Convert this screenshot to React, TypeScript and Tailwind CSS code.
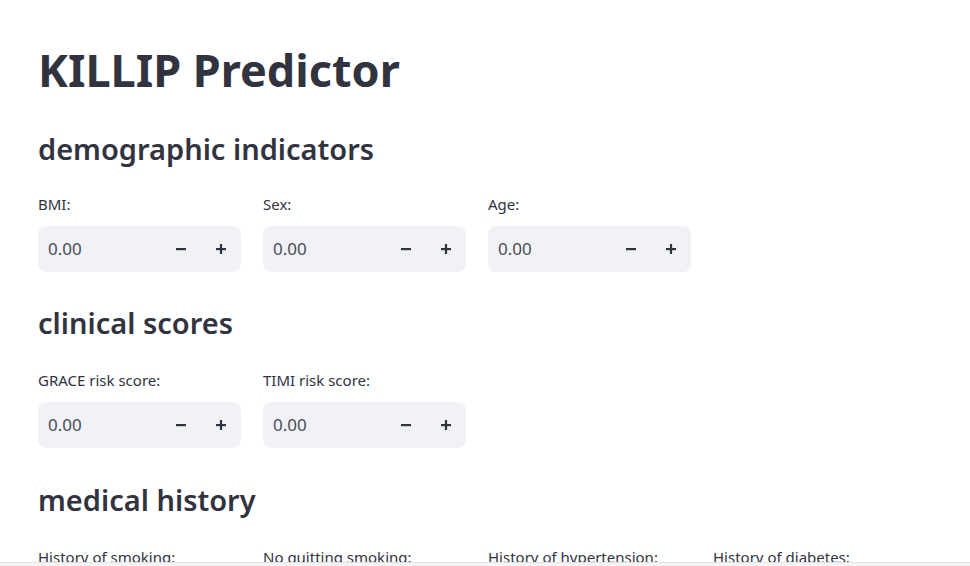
import React from 'react';

const font = { fontFamily: '"Noto Sans", Lato, sans-serif' };

const NumberInput = ({ label }: { label: string }) => (
    <div className="w-[203px] flex flex-col">
        <label className="text-[15px] leading-[20px] text-[#31333f] h-[20px] mb-[12px] whitespace-nowrap">
            {label}
        </label>
        <div className="h-[46px] rounded-lg bg-[#f0f2f6] flex flex-row items-center">
            <span className="flex-1 pl-[10px] text-[17px] text-[#4a4c57]">0.00</span>
            <button className="w-[40px] h-full flex items-center justify-center text-[#31333f]">
                <svg width="12" height="12" viewBox="0 0 12 12">
                    <rect x="1" y="5" width="10" height="2.2" fill="currentColor" />
                </svg>
            </button>
            <button className="w-[40px] h-full flex items-center justify-center text-[#31333f]">
                <svg width="12" height="12" viewBox="0 0 12 12">
                    <rect x="1" y="5" width="10" height="2.2" fill="currentColor" />
                    <rect x="4.9" y="1" width="2.2" height="10" fill="currentColor" />
                </svg>
            </button>
        </div>
    </div>
);

const Subheader = ({ children }: { children: React.ReactNode }) => (
    <h3 className="text-[29px] font-semibold leading-[40px] text-[#31333f]">
        {children}
    </h3>
);

export default function App() {
    return (
        <div className="w-[970px] h-[566px] bg-white flex flex-col overflow-hidden" style={font}>
            <div className="flex-1 overflow-hidden px-[38px]">
                <h1 className="mt-[41px] text-[45px] font-bold leading-[57px] text-[#31333f]">
                    KILLIP Predictor
                </h1>
                <div className="mt-[31px]">
                    <Subheader>demographic indicators</Subheader>
                </div>
                <div className="mt-[25px] flex flex-row gap-[22px]">
                    <NumberInput label="BMI:" />
                    <NumberInput label="Sex:" />
                    <NumberInput label="Age:" />
                </div>
                <div className="mt-[31px]">
                    <Subheader>clinical scores</Subheader>
                </div>
                <div className="mt-[27px] flex flex-row gap-[22px]">
                    <NumberInput label="GRACE risk score:" />
                    <NumberInput label="TIMI risk score:" />
                </div>
                <div className="mt-[32px]">
                    <Subheader>medical history</Subheader>
                </div>
                <div className="mt-[27px] flex flex-row gap-[22px]">
                    <NumberInput label="History of smoking:" />
                    <NumberInput label="No quitting smoking:" />
                    <NumberInput label="History of hypertension:" />
                    <NumberInput label="History of diabetes:" />
                </div>
            </div>
            <div className="h-[4px] border-t border-[#e3e3e3] bg-[#f4f4f4]" />
        </div>
    );
}
